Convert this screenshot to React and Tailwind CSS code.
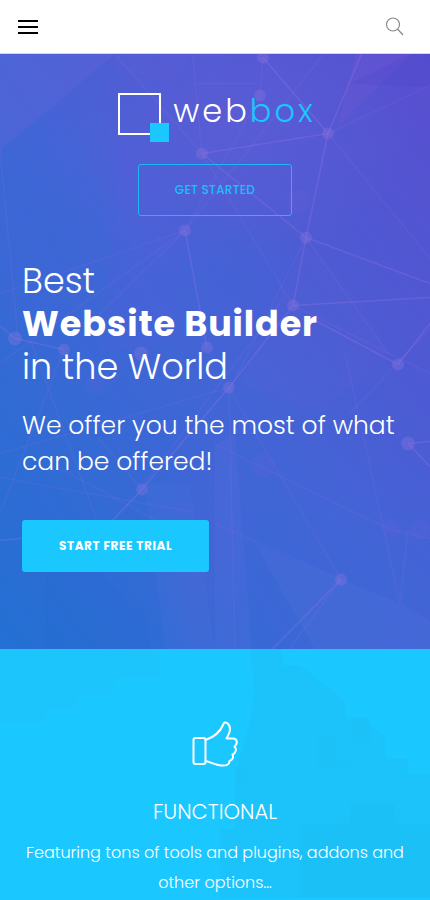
const nodes = [
  [263, 4, 6], [260, 42, 6], [328, 80, 6], [202, 100, 6], [185, 177, 6],
  [306, 184, 6], [293, 252, 6], [15, 285, 7], [64, 296, 6], [141, 300, 7], [207, 294, 6],
  [398, 311, 6], [229, 334, 6], [408, 390, 7], [142, 436, 6], [341, 526, 6],
];

const faintNodes = [[298, 148, 12], [263, 412, 12], [391, 476, 10], [420, 476, 10], [96, 330, 11]];

const brightLines = [
  [263, 4, 328, 80], [328, 80, 202, 100], [328, 80, 306, 184], [306, 184, 293, 252],
  [202, 100, 306, 184], [306, 184, 430, 230], [293, 252, 430, 244], [328, 80, 366, -10],
  [293, 252, 229, 334], [229, 334, 142, 436], [142, 436, 100, 480], [185, 177, 207, 294],
  [398, 311, 306, 262], [398, 311, 430, 270], [408, 390, 430, 388], [408, 390, 430, 413],
  [341, 526, 268, 600], [15, 285, 0, 272], [15, 285, 64, 296], [0, 487, 60, 481],
];

const faintLines = [
  [202, 100, 293, 252], [202, 100, 110, -5], [185, 177, 330, -8], [185, 177, 0, 240],
  [185, 177, 85, 275], [185, 177, 260, 42], [328, 80, 430, 32], [328, 80, 430, 205],
  [306, 184, 388, 300], [306, 184, 228, 340], [293, 252, 430, 320], [229, 334, 341, 526],
  [229, 334, 0, 400], [60, 415, 180, 480], [0, 424, 190, 458], [215, 391, 390, 476],
  [390, 476, 430, 485], [215, 470, 341, 526], [341, 526, 286, 600], [64, 296, 0, 460],
  [30, 285, 98, 470], [142, 436, 98, 384], [345, 300, 400, 550], [408, 476, 400, 550],
  [185, 177, 0, 310], [0, 95, 18, 285], [192, -5, 202, 100], [263, 4, 260, 42],
  [229, 334, 235, 600], [280, 250, 140, 436], [430, 275, 350, 360], [195, 30, 260, 30],
];

function Line({ points, opacity }) {
  const [x1, y1, x2, y2] = points;
  return <line x1={x1} y1={y1} x2={x2} y2={y2} stroke="#9c74e4" strokeOpacity={opacity} strokeWidth="1.5" />;
}

function HeroBackground() {
  return (
    <svg className="absolute inset-0 h-full w-full" viewBox="0 0 430 596" preserveAspectRatio="xMidYMid slice" aria-hidden="true">
      <defs>
        <linearGradient id="heroBase" x1="0" y1="1" x2="1" y2="0">
          <stop offset="0" stopColor="#2370d3" />
          <stop offset="0.5" stopColor="#4464d6" />
          <stop offset="1" stopColor="#594ecf" />
        </linearGradient>
        <radialGradient id="violetGlow">
          <stop offset="0" stopColor="#5d5dd6" stopOpacity="0.75" />
          <stop offset="1" stopColor="#5d5dd6" stopOpacity="0" />
        </radialGradient>
        <radialGradient id="blueGlow">
          <stop offset="0" stopColor="#3d67d6" stopOpacity="0.6" />
          <stop offset="1" stopColor="#3d67d6" stopOpacity="0" />
        </radialGradient>
      </defs>
      <rect width="430" height="596" fill="url(#heroBase)" />
      <ellipse cx="225" cy="70" rx="190" ry="150" fill="url(#violetGlow)" />
      <ellipse cx="40" cy="170" rx="100" ry="130" fill="url(#blueGlow)" />
      <ellipse cx="225" cy="215" rx="70" ry="60" fill="url(#blueGlow)" opacity="0.5" />
      <ellipse cx="205" cy="500" rx="55" ry="150" fill="url(#violetGlow)" opacity="0.4" />
      <ellipse cx="380" cy="540" rx="150" ry="130" fill="url(#blueGlow)" />
      <path d="M0 0H115L30 72L0 96Z" fill="#6868da" opacity="0.3" />
      <path d="M115 0H192L172 30L118 16Z" fill="#6e5cd6" opacity="0.15" />
      <path d="M355 0H412L338 72Z" fill="#7d58d4" opacity="0.25" />
      <path d="M412 0H430V34L350 30Z" fill="#4849cd" opacity="0.25" />
      <path d="M118 75L110 215L100 300L170 290L185 177Z" fill="#625cda" opacity="0.12" />
      <path d="M306 184L370 260L388 300L320 360L240 330Z" fill="#6e64da" opacity="0.08" />
      <path d="M215 391L235 380L252 596H215Z" fill="#6a7ae4" opacity="0.12" />
      <path d="M255 490L341 526L400 550L430 568V596H315Z" fill="#5878df" opacity="0.18" />
      <path d="M80 500L145 560L150 596H45V500Z" fill="#1e6bd0" opacity="0.08" />
      <path d="M145 430L165 596H215L190 430Z" fill="#657de3" opacity="0.1" />
      {faintLines.map((p, i) => <Line key={i} points={p} opacity={0.14} />)}
      {brightLines.map((p, i) => <Line key={i} points={p} opacity={0.3} />)}
      {faintNodes.map(([x, y, r], i) => <circle key={i} cx={x} cy={y} r={r} fill="#7f66dc" opacity="0.12" />)}
      {nodes.map(([x, y, r], i) => <circle key={i} cx={x} cy={y} r={r} fill="#9478e0" opacity="0.3" />)}
    </svg>
  );
}

function FeatureBackground() {
  return (
    <svg className="absolute inset-0 h-full w-full" viewBox="0 0 430 251" preserveAspectRatio="xMidYMin slice" aria-hidden="true">
      <path d="M250 0H282V16H300L345 52V68H360L385 88V110H408V125H430V251H220V180H235V125L248 80L255 45Z" fill="#1ebff5" opacity="0.4" />
      <path d="M0 0H160V28H115V45H78V60H45V75H0Z" fill="#1ec2f8" opacity="0.4" />
      <path d="M318 85H335V110H352V120H318ZM352 68H370V95H352ZM235 120H248V137H235Z" fill="#1cbbf2" opacity="0.2" />
      <path d="M350 155H395V174H430V251H300V174H350Z" fill="#1cbbf3" opacity="0.4" />
    </svg>
  );
}

function Logo() {
  return (
    <a href="#home" aria-label="webbox" className="flex h-[50px] items-start gap-1 pl-1">
      <svg width="51" height="50" viewBox="0 0 51 50" aria-hidden="true">
        <rect x="1" y="1" width="41" height="40" fill="none" stroke="#fff" strokeWidth="2" />
        <rect x="32" y="30" width="19" height="19" fill="#1bc7ff" />
      </svg>
      <span className="text-[32px] leading-9 font-light tracking-[3px] text-white">
        web<span className="text-[#1bc7ff]">box</span>
      </span>
    </a>
  );
}

export default function App() {
  return (
    <div className="min-h-screen bg-[#1bc7ff] font-[Poppins,Inter,sans-serif]">
      <header className="flex h-[54px] items-center justify-between border-b border-[#d5d3ec] bg-white pr-[26px] pl-[18px]">
        <button type="button" aria-label="Open menu">
          <svg width="20" height="16" viewBox="0 0 20 16" aria-hidden="true">
            <path d="M0 2H20M0 8H20M0 14H20" stroke="#000" strokeWidth="2" />
          </svg>
        </button>
        <button type="button" aria-label="Search">
          <svg width="19" height="19" viewBox="0 0 19 19" fill="none" stroke="#8a8a8a" strokeWidth="1.2" aria-hidden="true">
            <circle cx="8" cy="7.5" r="6.5" />
            <path d="M12.500 12L18 18" />
          </svg>
        </button>
      </header>
      <main>
        <section className="relative overflow-hidden bg-[#4363d5]">
          <HeroBackground />
          <div className="relative px-[22px] pt-[39px] pb-[77px]">
            <div className="flex flex-col items-center gap-[21px]">
              <Logo />
              <button type="button" className="h-[52px] rounded-[3px] border border-[#1bb8f6] px-9 text-xs font-medium tracking-wide text-[#1bc0fb]">
                GET STARTED
              </button>
            </div>
            <h1 className="mt-[43px] text-[35px] leading-[43px] font-light text-white">
              Best
              <strong className="block font-bold tracking-wide">Website Builder</strong>
              in the World
            </h1>
            <p className="mt-5 text-[25px] leading-9 font-light text-white">
              We offer you the most of what can be offered!
            </p>
            <button type="button" className="mt-10 h-[52px] rounded-[3px] bg-[#1bc7ff] px-[37px] text-xs font-bold tracking-wider text-white">
              START FREE TRIAL
            </button>
          </div>
        </section>
        <section className="relative overflow-hidden bg-[#1bc7ff] text-white">
          <FeatureBackground />
          <div className="relative flex flex-col items-center px-[22px] pt-[71px] text-center">
            <svg width="46" height="48" viewBox="0 0 46 48" fill="none" stroke="#fff" strokeWidth="2" strokeLinecap="round" strokeLinejoin="round" aria-hidden="true">
              <rect x="1.5" y="18" width="12" height="26" rx="2" />
              <path d="M13.500 20C21 17.500 28 12 31 5C32 2 33.500 2 35 3C39 6 38.500 12 34.500 18.500H41C45.500 18.500 46 24 42.500 26.500C45 29 44 33 40.500 34.500C42 38 40 40 37.500 41C37.500 45 34 46 29 45.500C23 45 19 42 13.500 41" />
            </svg>
            <h2 className="mt-[30px] text-[21px] leading-7 font-light">FUNCTIONAL</h2>
            <p className="mt-3 text-base leading-[30px] font-light">
              Featuring tons of tools and plugins, addons and other options…
            </p>
          </div>
        </section>
      </main>
    </div>
  );
}
